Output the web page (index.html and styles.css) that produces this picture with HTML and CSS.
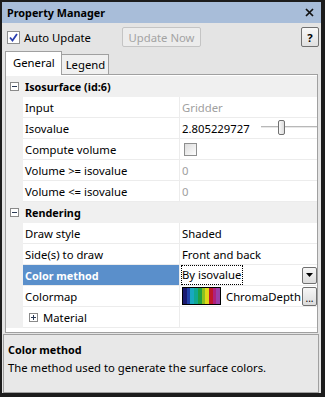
FILE: index.html
```html
<!DOCTYPE html>
<html lang="en">
<head>
    <meta charset="UTF-8">
    <title>Property Manager</title>
    <link rel="stylesheet" href="styles.css">
</head>
<body>
<div class="window">
    <div class="titlebar">
        <span class="title">Property Manager</span>
        <svg class="close" width="9" height="9" viewBox="0 0 9 9"><path d="M1 1L8 8M8 1L1 8" stroke="#111" stroke-width="1.7"/></svg>
    </div>

    <div class="toolbar">
        <label class="auto">
            <svg class="check" width="13" height="13" viewBox="0 0 13 13">
                <rect x="0.5" y="0.5" width="12" height="12" fill="#fff" stroke="#8e8f8f"/>
                <path d="M3 6.5L5.5 9.5L10 3" fill="none" stroke="#2a3fb0" stroke-width="1.8"/>
            </svg>
            Auto Update
        </label>
        <button class="btn now">Update Now</button>
        <button class="btn help">?</button>
    </div>

    <div class="tabs">
        <div class="tab active">General</div>
        <div class="tab">Legend</div>
    </div>

    <div class="panel">
        <div class="cat">
            <span class="gut"><svg width="9" height="9" viewBox="0 0 9 9"><rect x="0.5" y="0.5" width="8" height="8" fill="#fff" stroke="#8a8a8a"/><path d="M2 4.5H7" stroke="#2b3a55"/></svg></span>
            <span class="cat-name">Isosurface (id:6)</span>
        </div>
        <div class="row"><span class="gut"></span><span class="name">Input</span><span class="value muted">Gridder</span></div>
        <div class="row">
            <span class="gut"></span><span class="name">Isovalue</span>
            <span class="value">2.805229727<span class="slider"><span class="thumb"></span></span></span>
        </div>
        <div class="row">
            <span class="gut"></span><span class="name">Compute volume</span>
            <span class="value"><span class="box-check"></span></span>
        </div>
        <div class="row"><span class="gut"></span><span class="name">Volume &gt;= isovalue</span><span class="value muted">0</span></div>
        <div class="row"><span class="gut"></span><span class="name">Volume &lt;= isovalue</span><span class="value muted">0</span></div>
        <div class="cat">
            <span class="gut"><svg width="9" height="9" viewBox="0 0 9 9"><rect x="0.5" y="0.5" width="8" height="8" fill="#fff" stroke="#8a8a8a"/><path d="M2 4.5H7" stroke="#2b3a55"/></svg></span>
            <span class="cat-name">Rendering</span>
        </div>
        <div class="row"><span class="gut"></span><span class="name">Draw style</span><span class="value">Shaded</span></div>
        <div class="row"><span class="gut"></span><span class="name">Side(s) to draw</span><span class="value">Front and back</span></div>
        <div class="row selected">
            <span class="gut"></span><span class="name">Color method</span>
            <span class="value"><span class="focus">By isovalue</span><span class="drop"><svg width="7" height="4" viewBox="0 0 7 4"><path d="M0 0H7L3.5 4Z" fill="#000"/></svg></span></span>
        </div>
        <div class="row">
            <span class="gut"></span><span class="name">Colormap</span>
            <span class="value"><span class="swatch"></span><span class="cmap">ChromaDepth</span><span class="dots">...</span></span>
        </div>
        <div class="row">
            <span class="gut"></span>
            <span class="name sub"><svg width="9" height="9" viewBox="0 0 9 9"><rect x="0.5" y="0.5" width="8" height="8" fill="#fff" stroke="#8a8a8a"/><path d="M2 4.5H7M4.5 2V7" stroke="#2b3a55"/></svg>Material</span>
            <span class="value"></span>
        </div>
    </div>

    <div class="desc">
        <div class="desc-title">Color method</div>
        <div class="desc-text">The method used to generate the surface colors.</div>
    </div>
</div>
</body>
</html>
```

FILE: styles.css
```css
body {
    margin: 0;
    font-family: "Noto Sans", sans-serif;
    font-size: 11.3px;
    color: #000;
}
.window {
    width: 325px;
    height: 397px;
    box-sizing: border-box;
    border-style: solid;
    border-color: #1c1c1c;
    border-width: 2px 4px 4px 2px;
    background-color: #e4e4e4;
    display: flex;
    flex-direction: column;
}
.titlebar {
    height: 21px;
    background-color: #a8bdd9;
    display: flex;
    align-items: center;
    padding: 0 5px 0 5px;
    flex-shrink: 0;
}
.title {
    font-weight: bold;
    font-size: 10.8px;
    flex: 1;
}
.close {
    margin-right: 2px;
}
.toolbar {
    height: 28px;
    display: flex;
    align-items: center;
    padding: 0 2px 0 5px;
    flex-shrink: 0;
}
.auto {
    display: flex;
    align-items: center;
    gap: 4px;
    width: 115px;
}
.btn {
    font-family: inherit;
    font-size: 11.3px;
    height: 20px;
    padding: 0;
    border: 1px solid #c4c4c4;
    border-radius: 2px;
    background-color: #ececec;
}
.now {
    width: 79px;
    color: #a3a3a3;
}
.help {
    margin-left: auto;
    width: 18px;
    font-weight: bold;
    border-color: #707070;
    background: linear-gradient(#f8f8f8, #e0e0e0);
}
.tabs {
    height: 23px;
    display: flex;
    align-items: flex-end;
    padding-left: 3px;
    flex-shrink: 0;
}
.tab {
    height: 20px;
    line-height: 19px;
    box-sizing: border-box;
    border: 1px solid #a0a0a0;
    border-bottom: none;
    border-left: none;
    background-color: #f0f0f0;
    padding: 0 3px 0 4px;
}
.tab.active {
    height: 24px;
    line-height: 22px;
    border-left: 1px solid #a0a0a0;
    background-color: #fff;
    margin-bottom: -1px;
    padding: 0 6px 0 7px;
    position: relative;
    z-index: 1;
}
.panel {
    height: 259px;
    box-sizing: border-box;
    border: 1px solid #a0a0a0;
    margin: 0 3px 0 3px;
    background-color: #fff;
    padding-top: 1px;
    flex-shrink: 0;
}
.row, .cat {
    height: 21px;
    display: flex;
}
.gut {
    width: 17px;
    flex-shrink: 0;
    background-color: #f0f0f0;
    display: flex;
    align-items: center;
    justify-content: center;
}
.cat {
    background-color: #f0f0f0;
    font-weight: bold;
    font-size: 10.8px;
    align-items: center;
}
.cat-name {
    padding-left: 2px;
}
.name {
    width: 157px;
    flex-shrink: 0;
    box-sizing: border-box;
    border-right: 1px solid #ececec;
    border-bottom: 1px solid #ececec;
    padding-left: 2px;
    display: flex;
    align-items: center;
}
.name.sub svg {
    margin: 0 5px 0 4px;
}
.value {
    flex: 1;
    min-width: 0;
    border-bottom: 1px solid #ececec;
    padding-left: 2px;
    display: flex;
    align-items: center;
    white-space: nowrap;
}
.muted {
    color: #a0a0a0;
}
.slider {
    margin-left: auto;
    width: 56px;
    height: 20px;
    position: relative;
}
.slider::before {
    content: "";
    position: absolute;
    left: 0;
    right: 0;
    top: 8px;
    height: 1px;
    background-color: #b8b8b8;
    border-bottom: 1px solid #e8e8e8;
}
.thumb {
    position: absolute;
    left: 17px;
    top: 2px;
    width: 5px;
    height: 13px;
    border: 1px solid #707070;
    border-radius: 2px;
    background: linear-gradient(to right, #f8f8f8, #dcdcdc);
}
.box-check {
    width: 11px;
    height: 11px;
    margin-left: 2px;
    border: 1px solid #8e8f8f;
    background: linear-gradient(135deg, #dcdcdc, #fdfdfd);
}
.selected .name {
    background-color: #5a8fcb;
    color: #fff;
    font-weight: bold;
    font-size: 10.8px;
}
.selected .value {
    padding-left: 1px;
}
.focus {
    border: 1px dotted #000;
    height: 18px;
    line-height: 18px;
    padding: 0 1px 0 0;
}
.drop {
    margin-left: auto;
    width: 15px;
    height: 17px;
    box-sizing: border-box;
    border: 1px solid #707070;
    border-radius: 2px;
    background: linear-gradient(#f6f6f6, #dcdcdc);
    display: flex;
    align-items: center;
    justify-content: center;
}
.swatch {
    width: 37px;
    height: 16px;
    border: 1px solid #000;
    background: linear-gradient(to right,
        #1a1a70 0 10%, #2040a8 10% 20%, #18a8c0 20% 30%, #10a890 30% 40%,
        #20a040 40% 50%, #8cc020 50% 60%, #e0d818 60% 70%, #c01828 70% 80%,
        #b0207c 80% 90%, #9a40a8 90% 100%);
}
.cmap {
    margin-left: 5px;
}
.dots {
    margin-left: auto;
    width: 15px;
    height: 19px;
    box-sizing: border-box;
    border: 1px solid #707070;
    border-radius: 2px;
    background: linear-gradient(#f6f6f6, #dcdcdc);
    font-size: 10px;
    line-height: 20px;
    text-align: center;
}
.desc {
    height: 59px;
    box-sizing: border-box;
    margin: 1px 2px 0 1px;
    border: 1px solid #a0a0a0;
    background-color: #e8e8e8;
    padding: 6px 4px 0 4px;
    line-height: 18px;
    flex-shrink: 0;
}
.desc-title {
    font-weight: bold;
    font-size: 10.8px;
}
```
